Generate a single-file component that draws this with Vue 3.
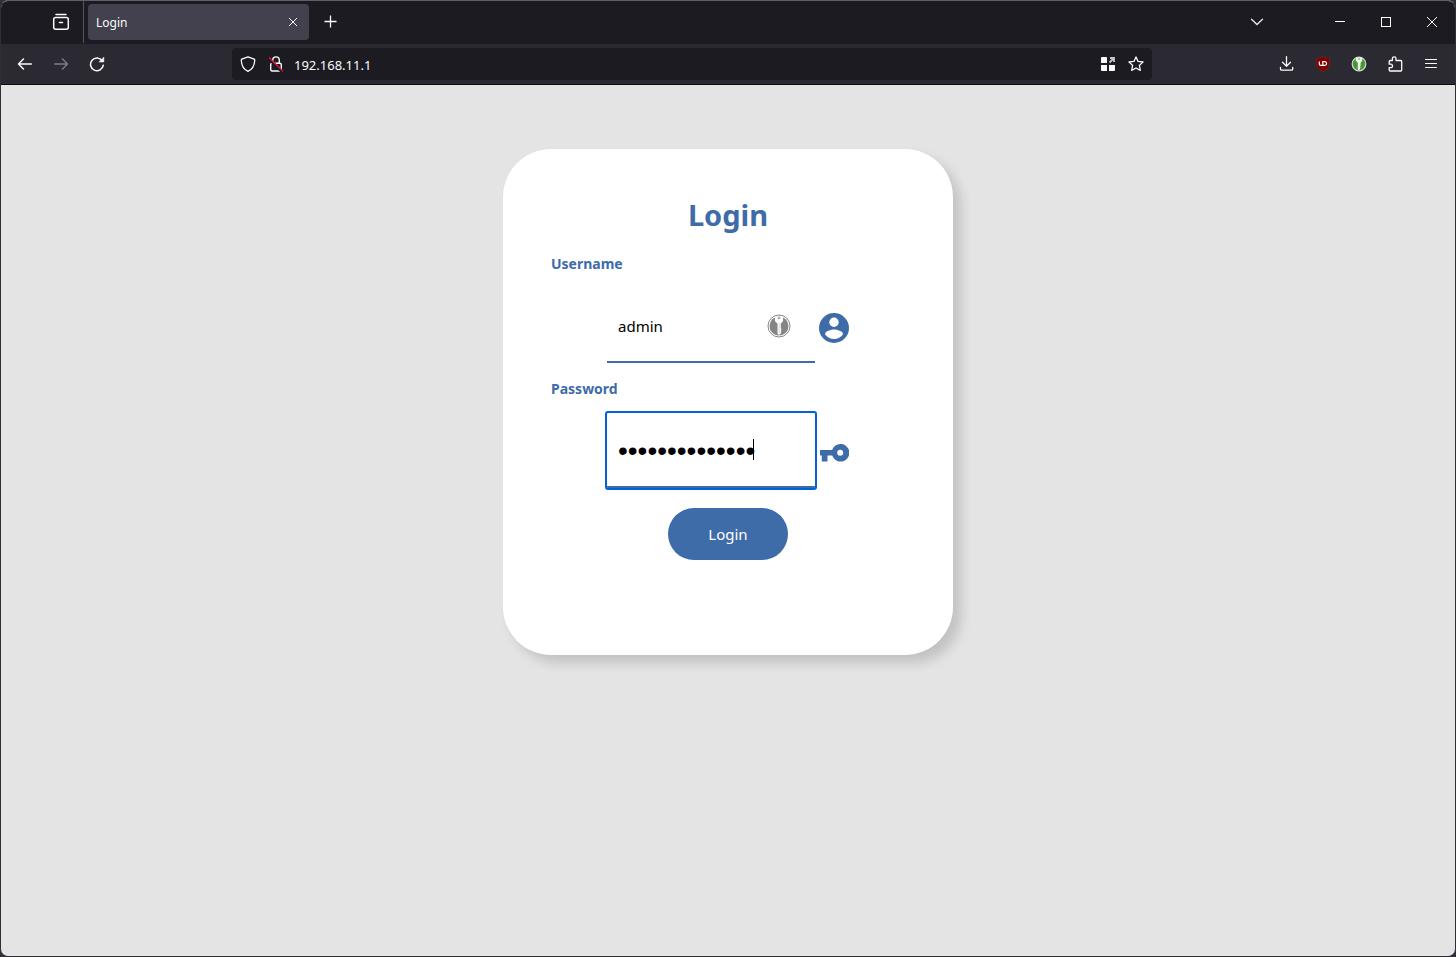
<script setup>
import { ref } from 'vue'

const address = ref('192.168.11.1')
const username = ref('admin')
const password = ref('routeradmin123')
</script>

<template>
  <div class="window">
    <header class="tabbar">
      <div class="view-slot">
        <button class="icon-btn" type="button" aria-label="Firefox View">
          <svg width="18" height="18" viewBox="0 0 18 18" fill="none" stroke="#fbfbfe" stroke-width="1.5" stroke-linecap="round">
            <path d="M4 1.600h10" />
            <rect x="1.700" y="4.600" width="14.600" height="11.700" rx="2" />
            <path d="M7.500 9.500h3" />
          </svg>
        </button>
      </div>
      <div class="tab">
        <span>Login</span>
        <button class="tab-close" type="button" aria-label="Close tab">
          <svg width="10" height="10" viewBox="0 0 10 10" stroke="#fbfbfe" stroke-width="1"><path d="M1 1l8 8M9 1l-8 8" /></svg>
        </button>
      </div>
      <button class="icon-btn new-tab" type="button" aria-label="New tab">
        <svg width="14" height="14" viewBox="0 0 14 14" stroke="#fbfbfe" stroke-width="1.300"><path d="M6.500 .5v12M.5 6.500h12" /></svg>
      </button>
      <button class="icon-btn all-tabs" type="button" aria-label="List all tabs">
        <svg width="14" height="14" viewBox="0 0 14 14" fill="none" stroke="#e4e4e8" stroke-width="1.400" stroke-linecap="round"><path d="M1.500 4.200 7 9.600l5.500-5.400" /></svg>
      </button>
      <div class="caption">
        <button type="button" aria-label="Minimize">
          <svg width="10" height="10" viewBox="0 0 10 10" stroke="#fff"><path d="M0 4.500h10" /></svg>
        </button>
        <button type="button" aria-label="Maximize">
          <svg width="10" height="10" viewBox="0 0 10 10" fill="none" stroke="#fff"><rect x=".5" y=".5" width="9" height="9" /></svg>
        </button>
        <button type="button" aria-label="Close">
          <svg width="10" height="10" viewBox="0 0 10 10" stroke="#fff"><path d="M0 0l10 10M10 0 0 10" /></svg>
        </button>
      </div>
    </header>

    <nav class="toolbar">
      <div class="nav-left">
        <button class="tool" type="button" aria-label="Back">
          <svg width="16" height="16" viewBox="0 0 16 16" fill="none" stroke="#fbfbfe" stroke-width="1.500" stroke-linecap="round" stroke-linejoin="round"><path d="M14.300 8H1.500M6.500 3 1.500 8l5 5" /></svg>
        </button>
        <button class="tool" type="button" aria-label="Forward" disabled>
          <svg width="16" height="16" viewBox="0 0 16 16" fill="none" stroke="#7d7c84" stroke-width="1.500" stroke-linecap="round" stroke-linejoin="round"><path d="M1.700 8h12.800M9.500 3l5 5-5 5" /></svg>
        </button>
        <button class="tool" type="button" aria-label="Reload">
          <svg width="16" height="16" viewBox="0 0 16 16" fill="none" stroke="#fbfbfe" stroke-width="1.500" stroke-linecap="round"><path d="M13.300 4.800A6.400 6.400 0 1 0 14.300 9.200" /><path d="M14.800 1.400v4.500h-4.500z" fill="#fbfbfe" stroke-width=".6" stroke-linejoin="round" /></svg>
        </button>
      </div>
      <div class="urlbar">
        <button type="button" aria-label="Tracking protection">
          <svg width="16" height="16" viewBox="0 0 16 16" fill="none" stroke="#fbfbfe" stroke-width="1.300" stroke-linejoin="round"><path d="M8 .8 14.200 3.200Q14.800 3.500 14.700 4.500C14.500 9.500 12 13.500 8 15.300 4 13.500 1.500 9.500 1.300 4.500Q1.200 3.500 1.800 3.200Z" /></svg>
        </button>
        <button type="button" aria-label="Connection not secure">
          <svg width="16" height="16" viewBox="0 0 16 16" fill="none" stroke="#fbfbfe" stroke-width="1.400"><rect x="2.700" y="7.200" width="10.600" height="7.800" rx="1.500" /><path d="M4.700 7V4.200a3.300 3.300 0 0 1 6.600 0V7" /><path d="M.6 2.800 14 16" stroke="#1c1b22" stroke-width="2.500" /><path d="M1 1.500 15 15.200" stroke="#e2133f" stroke-width="1.300" /></svg>
        </button>
        <input v-model="address" type="text" aria-label="Address" />
        <button type="button" aria-label="Open in container">
          <svg width="16" height="16" viewBox="0 0 16 16"><path d="M2 1h4a1 1 0 0 1 1 1v5H1V2a1 1 0 0 1 1-1zM1 9h6v6H2a1 1 0 0 1-1-1zM9 9h6v5a1 1 0 0 1-1 1H9z" fill="#fbfbfe" /><path d="M10 2h4v4M13.500 2.500 9.500 6.500" fill="none" stroke="#c5c5cb" stroke-width="1.800" /></svg>
        </button>
        <button type="button" aria-label="Bookmark this page">
          <svg width="16" height="16" viewBox="0 0 16 16" fill="none" stroke="#fbfbfe" stroke-width="1.300" stroke-linejoin="round"><path d="m8 .9 2.100 4.500 4.900.6-3.600 3.400.9 5-4.300-2.400-4.300 2.400.9-5L1 6l4.900-.6z" /></svg>
        </button>
      </div>
      <div class="nav-right">
        <button class="tool" type="button" aria-label="Downloads">
          <svg width="16" height="16" viewBox="0 0 16 16" fill="none" stroke="#fbfbfe" stroke-width="1.300" stroke-linecap="round" stroke-linejoin="round"><path d="M7.500.7v9.600M3.500 6.300l4 4 4-4M1.500 11.500v1.500q0 1.200 1.200 1.200h9.800q1.200 0 1.200-1.200v-1.500" /></svg>
        </button>
        <button class="tool" type="button" aria-label="uBlock Origin">
          <svg width="16" height="16" viewBox="0 0 16 16" fill="none"><path d="M8 .5Q10.500 2.200 14.600 2.300V7.500Q14.600 13 8 15.600 1.400 13 1.400 7.500V2.300Q5.500 2.200 8 .5z" fill="#800000" stroke="#6d2929" stroke-width=".7" /><path d="M4.300 5.600v2.500q0 1.300 1.300 1.300H7.800V5.600h1.900a1.900 1.900 0 0 1 0 3.800H7.800" stroke="#fff" stroke-width="1.200" /></svg>
        </button>
        <button class="tool" type="button" aria-label="Password manager">
          <svg width="16" height="16" viewBox="0 0 16 16"><circle cx="8" cy="8" r="6.800" fill="#459832" stroke="#d9ddd8" stroke-width="1.200" /><path d="M4.800 2.200q3.200-1.300 6.400 0v2.600L9.600 6.700V10l-.6.600.6.800-.6.800v1L8 14.200l-1.200-1V6.700L4.800 4.800z" fill="#eef5ec" /><circle cx="8" cy="3" r=".7" fill="#459832" /></svg>
        </button>
        <button class="tool" type="button" aria-label="Extensions">
          <svg width="16" height="16" viewBox="0 0 16 16" fill="none" stroke="#fbfbfe" stroke-width="1.300" stroke-linejoin="round"><path d="M5.400 4.500V2.600a1.800 1.800 0 0 1 3.600 0v1.900h4.600q1.100 0 1.100 1.100v8.500q0 .9-.9.900H3.200q-1 0-1-1v-2.300h1.600a1.700 1.700 0 0 0 0-3.500H2.200V5.500q0-1 1-1z" /></svg>
        </button>
        <button class="tool" type="button" aria-label="Menu">
          <svg width="16" height="16" viewBox="0 0 16 16" stroke="#fbfbfe" stroke-width="1.100" stroke-linecap="round"><path d="M2.500 3.500h11M2.500 7.500h11M2.500 11.500h11" /></svg>
        </button>
      </div>
    </nav>

    <main class="page">
      <form class="card" @submit.prevent>
        <h1>Login</h1>
        <label for="user">Username</label>
        <div class="field">
          <div class="box">
            <input id="user" v-model="username" type="text" />
            <svg class="badge" width="24" height="24" viewBox="0 0 24 24">
              <circle cx="12" cy="12" r="11" fill="#fff" stroke="#858585" />
              <circle cx="12" cy="12" r="9.500" fill="#858585" />
              <path d="M8 3.300q4-1.700 8 0v4L13.800 9.500v4.700l.8.900-.9 1 .9 1-.9 1 .5.900L12 21l-1.500-1.500v-10L8 7.300z" fill="#fff" />
              <ellipse cx="12" cy="4.100" rx="1.500" ry=".8" fill="#858585" />
              <path d="M12.200 9v10" stroke="#c3c3c3" stroke-width=".7" />
            </svg>
          </div>
          <svg class="field-icon" width="30" height="30" viewBox="0 0 30 30">
            <circle cx="15" cy="15" r="15" fill="#3e6ca8" />
            <circle cx="15" cy="9.200" r="4.700" fill="#fff" />
            <path d="M6 21.200C6.200 18.200 12 16.600 15 16.600s8.800 1.600 9 4.600C22 24.200 18.700 26 15 26s-7-1.800-9-4.800z" fill="#fff" />
          </svg>
        </div>
        <label for="pass">Password</label>
        <div class="field">
          <div class="box">
            <input id="pass" v-model="password" class="focused" type="password" />
            <span class="caret"></span>
          </div>
          <svg class="field-icon" width="30" height="30" viewBox="0 0 30 30">
            <path d="M13.200 12a8.800 8.800 0 1 1 0 5.600H8.500v6H2.800v-6H1V12zM21.200 11.800a3 3 0 1 0 0 6 3 3 0 0 0 0-6z" fill="#3e6ca8" fill-rule="evenodd" />
          </svg>
        </div>
        <button class="submit" type="submit">Login</button>
      </form>
    </main>
  </div>
</template>

<style>
body {
  background: #303038;
}
</style>

<style scoped>
.window {
  box-sizing: border-box;
  min-height: 100vh;
  display: flex;
  flex-direction: column;
  border: 1px solid #303033;
  border-top-color: #59616a;
  border-radius: 8px;
  overflow: hidden;
  background: #e4e4e4;
  font-family: "Noto Sans", "Open Sans", sans-serif;
}

button {
  display: flex;
  align-items: center;
  justify-content: center;
  margin: 0;
  padding: 0;
  border: 0;
  background: none;
  color: inherit;
  font-family: inherit;
}

input {
  box-sizing: border-box;
  border: 0;
  background: none;
  outline: none;
  font-family: inherit;
}

svg {
  display: block;
  flex: none;
}

.tabbar {
  box-sizing: border-box;
  display: flex;
  align-items: center;
  height: 43px;
  padding-bottom: 1px;
  background: #1c1b22;
  color: #fbfbfe;
}

.view-slot {
  box-sizing: border-box;
  display: flex;
  align-items: center;
  justify-content: flex-end;
  width: 83px;
  height: 100%;
  padding-right: 4px;
  border-right: 1px solid #55545b;
}

.icon-btn {
  width: 36px;
  height: 36px;
}

.tab {
  box-sizing: border-box;
  display: flex;
  align-items: center;
  justify-content: space-between;
  width: 221px;
  height: 36px;
  margin-left: 4px;
  padding: 0 4px 0 8px;
  border-radius: 4px;
  background: #42414d;
  font-size: 12px;
}

.tab-close {
  width: 24px;
  height: 24px;
}

.new-tab {
  margin-left: 4px;
}

.all-tabs {
  margin-left: auto;
  margin-right: 42px;
}

.caption {
  display: flex;
}

.caption button {
  width: 46px;
  height: 36px;
}

.toolbar {
  display: flex;
  align-items: center;
  height: 40px;
  background: #2b2a33;
  border-bottom: 1px solid #0c0c0d;
}

.nav-left,
.nav-right {
  box-sizing: border-box;
  display: flex;
  flex: none;
  padding: 0 6px;
}

.nav-left {
  width: 231px;
}

.nav-right {
  width: 303px;
  justify-content: flex-end;
}

.tool {
  width: 36px;
  height: 32px;
}

.urlbar {
  display: flex;
  flex: 1;
  align-items: center;
  height: 32px;
  padding: 0 2px;
  box-sizing: border-box;
  border-radius: 4px;
  background: #1c1b22;
}

.urlbar button {
  width: 28px;
  height: 28px;
}

.urlbar input {
  flex: 1;
  min-width: 0;
  padding: 2px 4px 0;
  color: #fbfbfe;
  font-size: 13px;
  line-height: 20px;
}

.page {
  flex: 1;
  padding: 64px 16px;
}

.card {
  box-sizing: border-box;
  display: flex;
  flex-direction: column;
  max-width: 450px;
  margin: 0 auto;
  padding: 46px 48px 95px;
  border-radius: 48px;
  background: #fff;
  box-shadow: 8px 8px 12px rgba(0, 0, 0, 0.15);
  color: #3e6ca8;
}

h1 {
  margin: 0 0 19px;
  font-size: 29px;
  line-height: 40px;
  text-align: center;
}

label {
  margin-bottom: 14px;
  font-size: 14px;
  font-weight: 700;
  line-height: 20px;
}

.field {
  display: flex;
  align-items: center;
  justify-content: center;
  gap: 4px;
  margin-bottom: 16px;
}

.field-icon {
  margin-top: 4px;
}

.box {
  position: relative;
  width: 208px;
}

.box input {
  display: block;
  width: 100%;
  height: 75px;
  padding: 2px 11px 0;
  border-bottom: 2px solid #3e6ca8;
  color: #000;
  font-size: 15px;
}

.box .focused {
  outline: 2px solid #0561d8;
  border-radius: 1px;
  font-family: "Liberation Sans", Arial, sans-serif;
  font-size: 28px;
  caret-color: transparent;
}

.badge {
  position: absolute;
  top: 26px;
  right: 24px;
}

.caret {
  position: absolute;
  top: 26px;
  left: 146px;
  width: 1px;
  height: 21px;
  background: #000;
}

.submit {
  align-self: center;
  width: 120px;
  height: 52px;
  margin-top: 4px;
  border-radius: 26px;
  background: #3e6ca8;
  color: #fff;
  font-size: 15px;
}
</style>
